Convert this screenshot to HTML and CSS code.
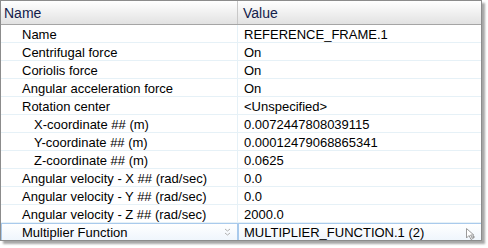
FILE: index.html
```html
<html>
<head>
    <title>Reference Frame Properties</title>
    <link rel="stylesheet" href="styles.css">
</head>
<body>
    <div class="panel">
        <div class="head">
            <div class="hcell">Name</div>
            <div class="hcell">Value</div>
        </div>
        <div class="row"><div class="cell l1">Name</div><div class="cell val">REFERENCE_FRAME.1</div></div>
        <div class="row"><div class="cell l1">Centrifugal force</div><div class="cell val">On</div></div>
        <div class="row"><div class="cell l1">Coriolis force</div><div class="cell val">On</div></div>
        <div class="row"><div class="cell l1">Angular acceleration force</div><div class="cell val">On</div></div>
        <div class="row"><div class="cell l1">Rotation center</div><div class="cell val">&lt;Unspecified&gt;</div></div>
        <div class="row"><div class="cell l2">X-coordinate ## (m)</div><div class="cell val">0.0072447808039115</div></div>
        <div class="row"><div class="cell l2">Y-coordinate ## (m)</div><div class="cell val">0.00012479068865341</div></div>
        <div class="row"><div class="cell l2">Z-coordinate ## (m)</div><div class="cell val">0.0625</div></div>
        <div class="row"><div class="cell l1">Angular velocity - X ## (rad/sec)</div><div class="cell val">0.0</div></div>
        <div class="row"><div class="cell l1">Angular velocity - Y ## (rad/sec)</div><div class="cell val">0.0</div></div>
        <div class="row"><div class="cell l1">Angular velocity - Z ## (rad/sec)</div><div class="cell val">2000.0</div></div>
        <div class="row sel">
            <div class="cell l1 edit">
                <span>Multiplier Function</span>
                <svg class="spin" width="7" height="9" viewBox="0 0 7 9">
                    <path d="M1 1 L3.5 3 L6 1 M1 5 L3.5 7 L6 5" fill="none" stroke="#b0b0b0" stroke-width="1"/>
                </svg>
            </div>
            <div class="cell val edit">
                <span>MULTIPLIER_FUNCTION.1 (2)</span>
                <svg class="cursor" width="10" height="14" viewBox="0 0 10 14">
                    <path d="M1.5 1.5 L1.5 11 L4 8.5 L6 12.5 L7.5 11.8 L5.6 8 L8.8 8 Z" fill="#ffffff" stroke="#9a9a9a" stroke-width="1"/>
                    <path d="M7 10 H10 M8.5 8.5 V11.5" stroke="#9a9a9a" stroke-width="1"/>
                </svg>
            </div>
        </div>
    </div>
</body>
</html>
```

FILE: styles.css
```css
body { margin: 0; background: #ffffff; font-family: "Liberation Sans", Arial, sans-serif; font-size: 13px; color: #000000; }
.panel { width: 480px; height: 239px; border: solid 1px #8c8c8c; box-shadow: 3px 3px 2px rgba(0,0,0,0.35); background: #ffffff; overflow: hidden; }
.head { display: grid; grid-template-columns: 237px 1fr; height: 23px; background: linear-gradient(#ffffff, #e2e2e2); border-bottom: solid 1px #a5a5a5; }
.hcell { font-size: 14px; color: #12204a; padding: 4px 0 0 3px; border-right: solid 1px #c8c8c8; }
.hcell:last-child { border-right: none; padding-left: 5px; }
.row { display: grid; grid-template-columns: 237px 1fr; height: 18px; border-bottom: solid 1px #e6f1f7; box-sizing: border-box; }
.cell { padding-top: 2px; border-right: solid 1px #e6f1f7; white-space: nowrap; }
.cell:last-child { border-right: none; }
.l1 { padding-left: 21px; }
.l2 { padding-left: 33px; }
.val { padding-left: 6px; }
.row.sel { height: 19px; border-bottom: none; }
.edit { display: flex; align-items: center; justify-content: space-between; padding-top: 0; border: solid 1px #a9caec; background: linear-gradient(#ffffff, #eef5fc); }
.l1.edit { padding-left: 20px; padding-right: 6px; }
.val.edit { padding-left: 5px; padding-right: 6px; }
.cursor { margin-top: 2px; }
```
